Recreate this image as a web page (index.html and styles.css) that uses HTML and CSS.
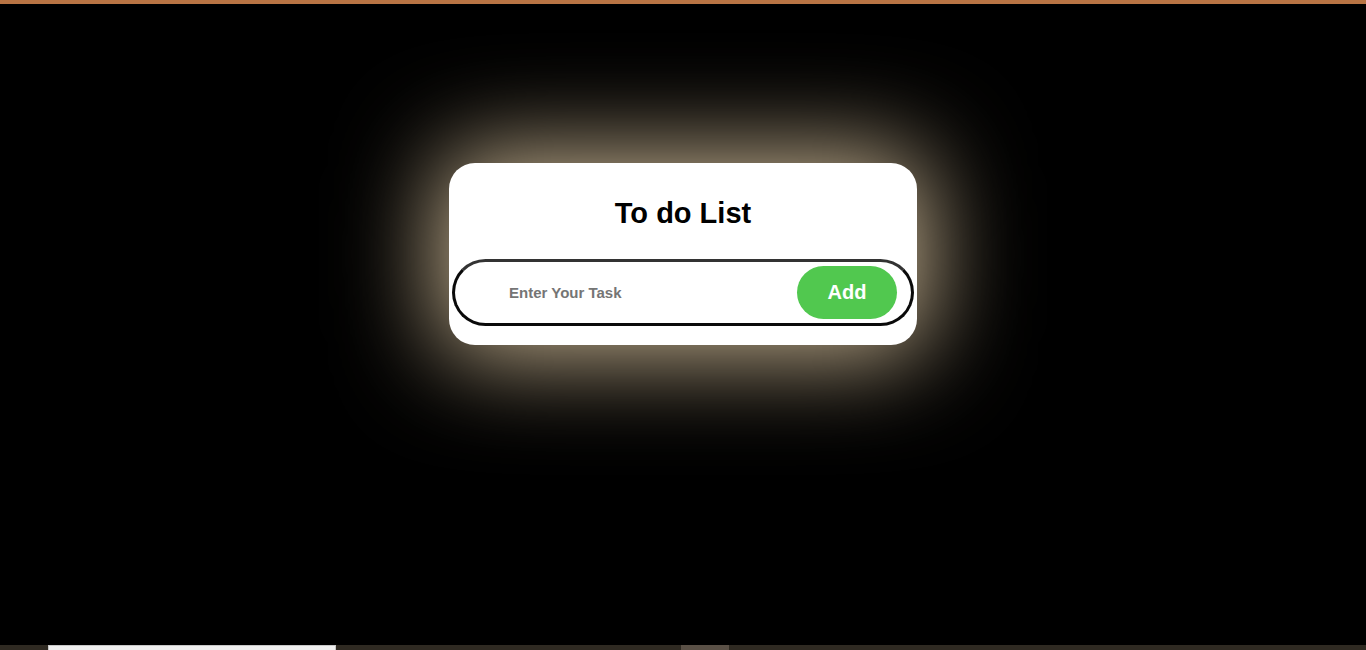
FILE: index.html
```html
<!DOCTYPE html>
<html>
<head>
<meta charset="utf-8">
<link rel="stylesheet" href="styles.css">
</head>
<body>
<div class="topbar"></div>
<main class="stage">
  <div class="card">
    <h1 class="title">To do List</h1>
    <div class="row">
      <input class="task" type="text" placeholder="Enter Your Task">
      <button class="add">Add</button>
    </div>
  </div>
</main>
<div class="bottombar">
  <div class="seg seg-light"></div>
  <div class="seg seg-gap"></div>
  <div class="seg seg-thumb"></div>
</div>
</body>
</html>
```
FILE: styles.css
```css
html, body {
  margin: 0;
  padding: 0;
  height: 650px;
  overflow: hidden;
  background: #000;
  font-family: "Liberation Sans", Arial, sans-serif;
}
body {
  display: flex;
  flex-direction: column;
}
.topbar {
  height: 4px;
  background: #b87444;
  flex: none;
}
.stage {
  flex: 1;
  display: flex;
  justify-content: center;
  align-items: flex-start;
  padding-top: 159px;
}
.card {
  width: 468px;
  height: 182px;
  box-sizing: border-box;
  background: #fff;
  border-radius: 26px;
  padding: 34px 3px 0;
  box-shadow: 0 0 100px 10px rgba(255, 230, 187, 0.8);
  display: flex;
  flex-direction: column;
  align-items: stretch;
}
.title {
  margin: 0;
  font-size: 29px;
  line-height: 32px;
  font-weight: bold;
  text-align: center;
  color: #000;
}
.row {
  margin-top: 30px;
  height: 67px;
  box-sizing: border-box;
  border: 3px solid #0a0a0a;
  border-top-color: #333;
  border-radius: 40px;
  display: flex;
  align-items: center;
  padding: 0 14px 0 54px;
}
.task {
  flex: 1;
  border: none;
  outline: none;
  background: transparent;
  font-family: "Liberation Sans", Arial, sans-serif;
  font-size: 15px;
  font-weight: bold;
  color: #333;
  padding: 0;
}
.task::placeholder {
  color: #757575;
}
.add {
  width: 100px;
  height: 53px;
  border: none;
  border-radius: 30px;
  background: #51c84f;
  color: #fff;
  font-family: "Liberation Sans", Arial, sans-serif;
  font-size: 20px;
  font-weight: bold;
  padding: 0;
}
.bottombar {
  height: 5px;
  flex: none;
  background: #2f2a22;
  display: flex;
}
.seg-light {
  margin-left: 48px;
  width: 286px;
  background: #f0f0f0;
  border: 1px solid #c8c8c8;
  border-bottom: none;
}
.seg-gap {
  width: 345px;
}
.seg-thumb {
  width: 48px;
  background: #5a5046;
}
```
